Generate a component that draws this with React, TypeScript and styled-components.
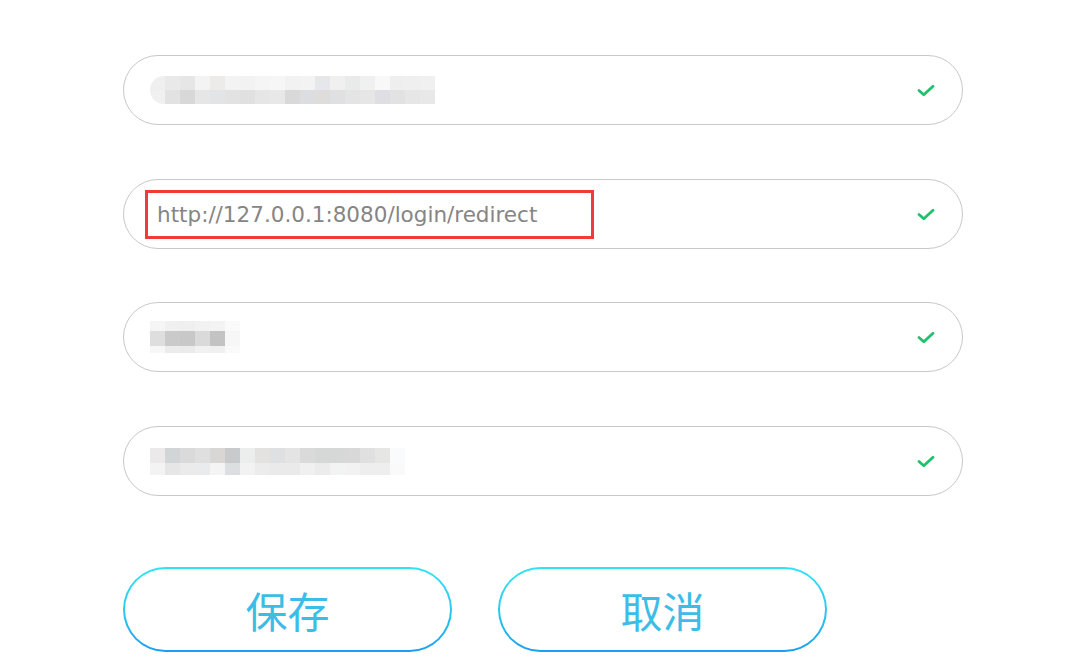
import React from "react";
import styled, { createGlobalStyle } from "styled-components";

const GlobalStyle = createGlobalStyle`
  html, body { margin: 0; padding: 0; background: #ffffff; }
  body { font-family: "DejaVu Sans", "Noto Sans CJK SC", sans-serif; }
`;

const Page = styled.div`
  width: 1083px;
  height: 670px;
  box-sizing: border-box;
  padding: 55px 0 0 123px;
  overflow: hidden;
  background: #ffffff;
`;

const Form = styled.div`
  display: flex;
  flex-direction: column;
  width: 840px;
`;

const Field = styled.div<{ $mt?: number }>`
  position: relative;
  box-sizing: border-box;
  height: 70px;
  margin-top: ${(p) => p.$mt ?? 0}px;
  border: 1px solid #c8c8c8;
  border-radius: 35px;
  display: flex;
  align-items: center;
  padding: 0 27px 0 26px;
`;

const Value = styled.div`
  flex: 1;
  display: flex;
  align-items: center;
  min-width: 0;
`;

const Highlight = styled.div<{ $width: number }>`
  box-sizing: border-box;
  width: ${(p) => p.$width}px;
  height: 49px;
  margin-left: -5px;
  border: 3px solid #f23a3a;
  padding-left: 9px;
  display: flex;
  align-items: center;
  font-family: "DejaVu Sans", sans-serif;
  font-size: 21.5px;
  color: #858585;
  white-space: nowrap;
`;

const Mosaic = styled.div`
  display: flex;
  flex-direction: column;
`;

const MosaicRow = styled.div<{ $h: number }>`
  display: flex;
  height: ${(p) => p.$h}px;
`;

const Cell = styled.div<{ $c: string; $round?: string }>`
  width: 15px;
  height: 100%;
  background: ${(p) => p.$c};
  border-radius: ${(p) => p.$round ?? "0"};
`;

const Check = styled.svg`
  width: 18px;
  height: 13px;
  flex: none;
`;

const Buttons = styled.div`
  display: flex;
  gap: 46px;
  margin-top: 71px;
`;

const Button = styled.button`
  box-sizing: border-box;
  width: 329px;
  height: 85px;
  border-radius: 43px;
  border: 2px solid transparent;
  background:
    linear-gradient(#ffffff, #ffffff) padding-box,
    linear-gradient(180deg, #30e4f3 0%, #2cc6ee 55%, #1a9ef0 100%) border-box;
  color: #3bbde8;
  font-family: "Noto Sans CJK SC", sans-serif;
  font-size: 42px;
  line-height: 1;
  padding: 0;
  display: flex;
  align-items: center;
  justify-content: center;
  cursor: pointer;
`;

type Row = { h: number; cells: string[] };

const mosaics: Row[][] = [
  [
    {
      h: 14,
      cells: [
        "#efefef", "#e9e9e9", "#e6e6e6", "#f3f3f3", "#ecebea", "#f3f3f3", "#f2f2f2",
        "#f5f5f5", "#f6f6f6", "#f2f2f2", "#f3f3f3", "#e6e7ea", "#f0f0f0", "#e9eaea",
        "#f0f0f0", "#f8f8f8", "#eeeeee", "#efefef", "#f0f0f0",
      ],
    },
    {
      h: 14,
      cells: [
        "#f0f0f0", "#e2e2e2", "#d8d8d8", "#e6e6e6", "#e3e4e6", "#e2e2e2", "#e0e0e0",
        "#e6e6e6", "#e8e8e8", "#d9d9d9", "#dcdde0", "#dedddc", "#dfe0e2", "#e4e4e4",
        "#e6e6e6", "#dddfe2", "#e2e2e2", "#e6e6e6", "#e8e8e8",
      ],
    },
  ],
  [],
  [
    { h: 10, cells: ["#f5f5f5", "#f0f0f0", "#efefef", "#f2f2f2", "#f3f3f3", "#fafafa"] },
    { h: 15, cells: ["#dedede", "#cacaca", "#c9c8c8", "#dadada", "#c3c3c3", "#f7f7f7"] },
    { h: 7, cells: ["#f7f7f7", "#ececec", "#ebebeb", "#f1f1f1", "#f0f0f0", "#fafafa"] },
  ],
  [
    {
      h: 15,
      cells: [
        "#ebe9ea", "#d2d5d5", "#dadada", "#dfdfdf", "#d8d7d5", "#c8cacc", "#eceeee",
        "#e4e2e0", "#dfe0e2", "#e4e4e4", "#dadada", "#d6d8d8", "#d6d8d8", "#d8d8d8",
        "#e0e0e0", "#e6e6e4", "#fafbfd",
      ],
    },
    {
      h: 12,
      cells: [
        "#f3f3f3", "#e6e6e6", "#ebebeb", "#eaebed", "#f4f4f4", "#dddee0", "#f2f2f2",
        "#ececec", "#eaeaea", "#eaeaea", "#f0f0f0", "#ececec", "#f2f4f4", "#f2f2f2",
        "#eeeeee", "#eeeeee", "#fafafa",
      ],
    },
  ],
];

const CheckIcon = () => (
  <Check viewBox="0 0 18 13" aria-hidden="true">
    <path
      d="M2 6.5 L6.8 10.8 L16 2.2"
      fill="none"
      stroke="#21c06c"
      strokeWidth="2.8"
      strokeLinecap="round"
      strokeLinejoin="round"
    />
  </Check>
);

const Blur = ({ rows, rounded }: { rows: Row[]; rounded?: boolean }) => (
  <Mosaic>
    {rows.map((r, i) => (
      <MosaicRow key={i} $h={r.h}>
        {r.cells.map((c, j) => (
          <Cell
            key={j}
            $c={c}
            $round={
              rounded && j === 0
                ? i === 0
                  ? "14px 0 0 0"
                  : i === rows.length - 1
                  ? "0 0 0 14px"
                  : "0"
                : undefined
            }
          />
        ))}
      </MosaicRow>
    ))}
  </Mosaic>
);

export default function App() {
  return (
    <>
      <GlobalStyle />
      <Page>
        <Form>
          <Field>
            <Value>
              <Blur rows={mosaics[0]} rounded />
            </Value>
            <CheckIcon />
          </Field>
          <Field $mt={54}>
            <Value>
              <Highlight $width={449}>http://127.0.0.1:8080/login/redirect</Highlight>
            </Value>
            <CheckIcon />
          </Field>
          <Field $mt={53}>
            <Value>
              <Blur rows={mosaics[2]} />
            </Value>
            <CheckIcon />
          </Field>
          <Field $mt={54}>
            <Value>
              <Blur rows={mosaics[3]} />
            </Value>
            <CheckIcon />
          </Field>
        </Form>
        <Buttons>
          <Button>保存</Button>
          <Button>取消</Button>
        </Buttons>
      </Page>
    </>
  );
}
